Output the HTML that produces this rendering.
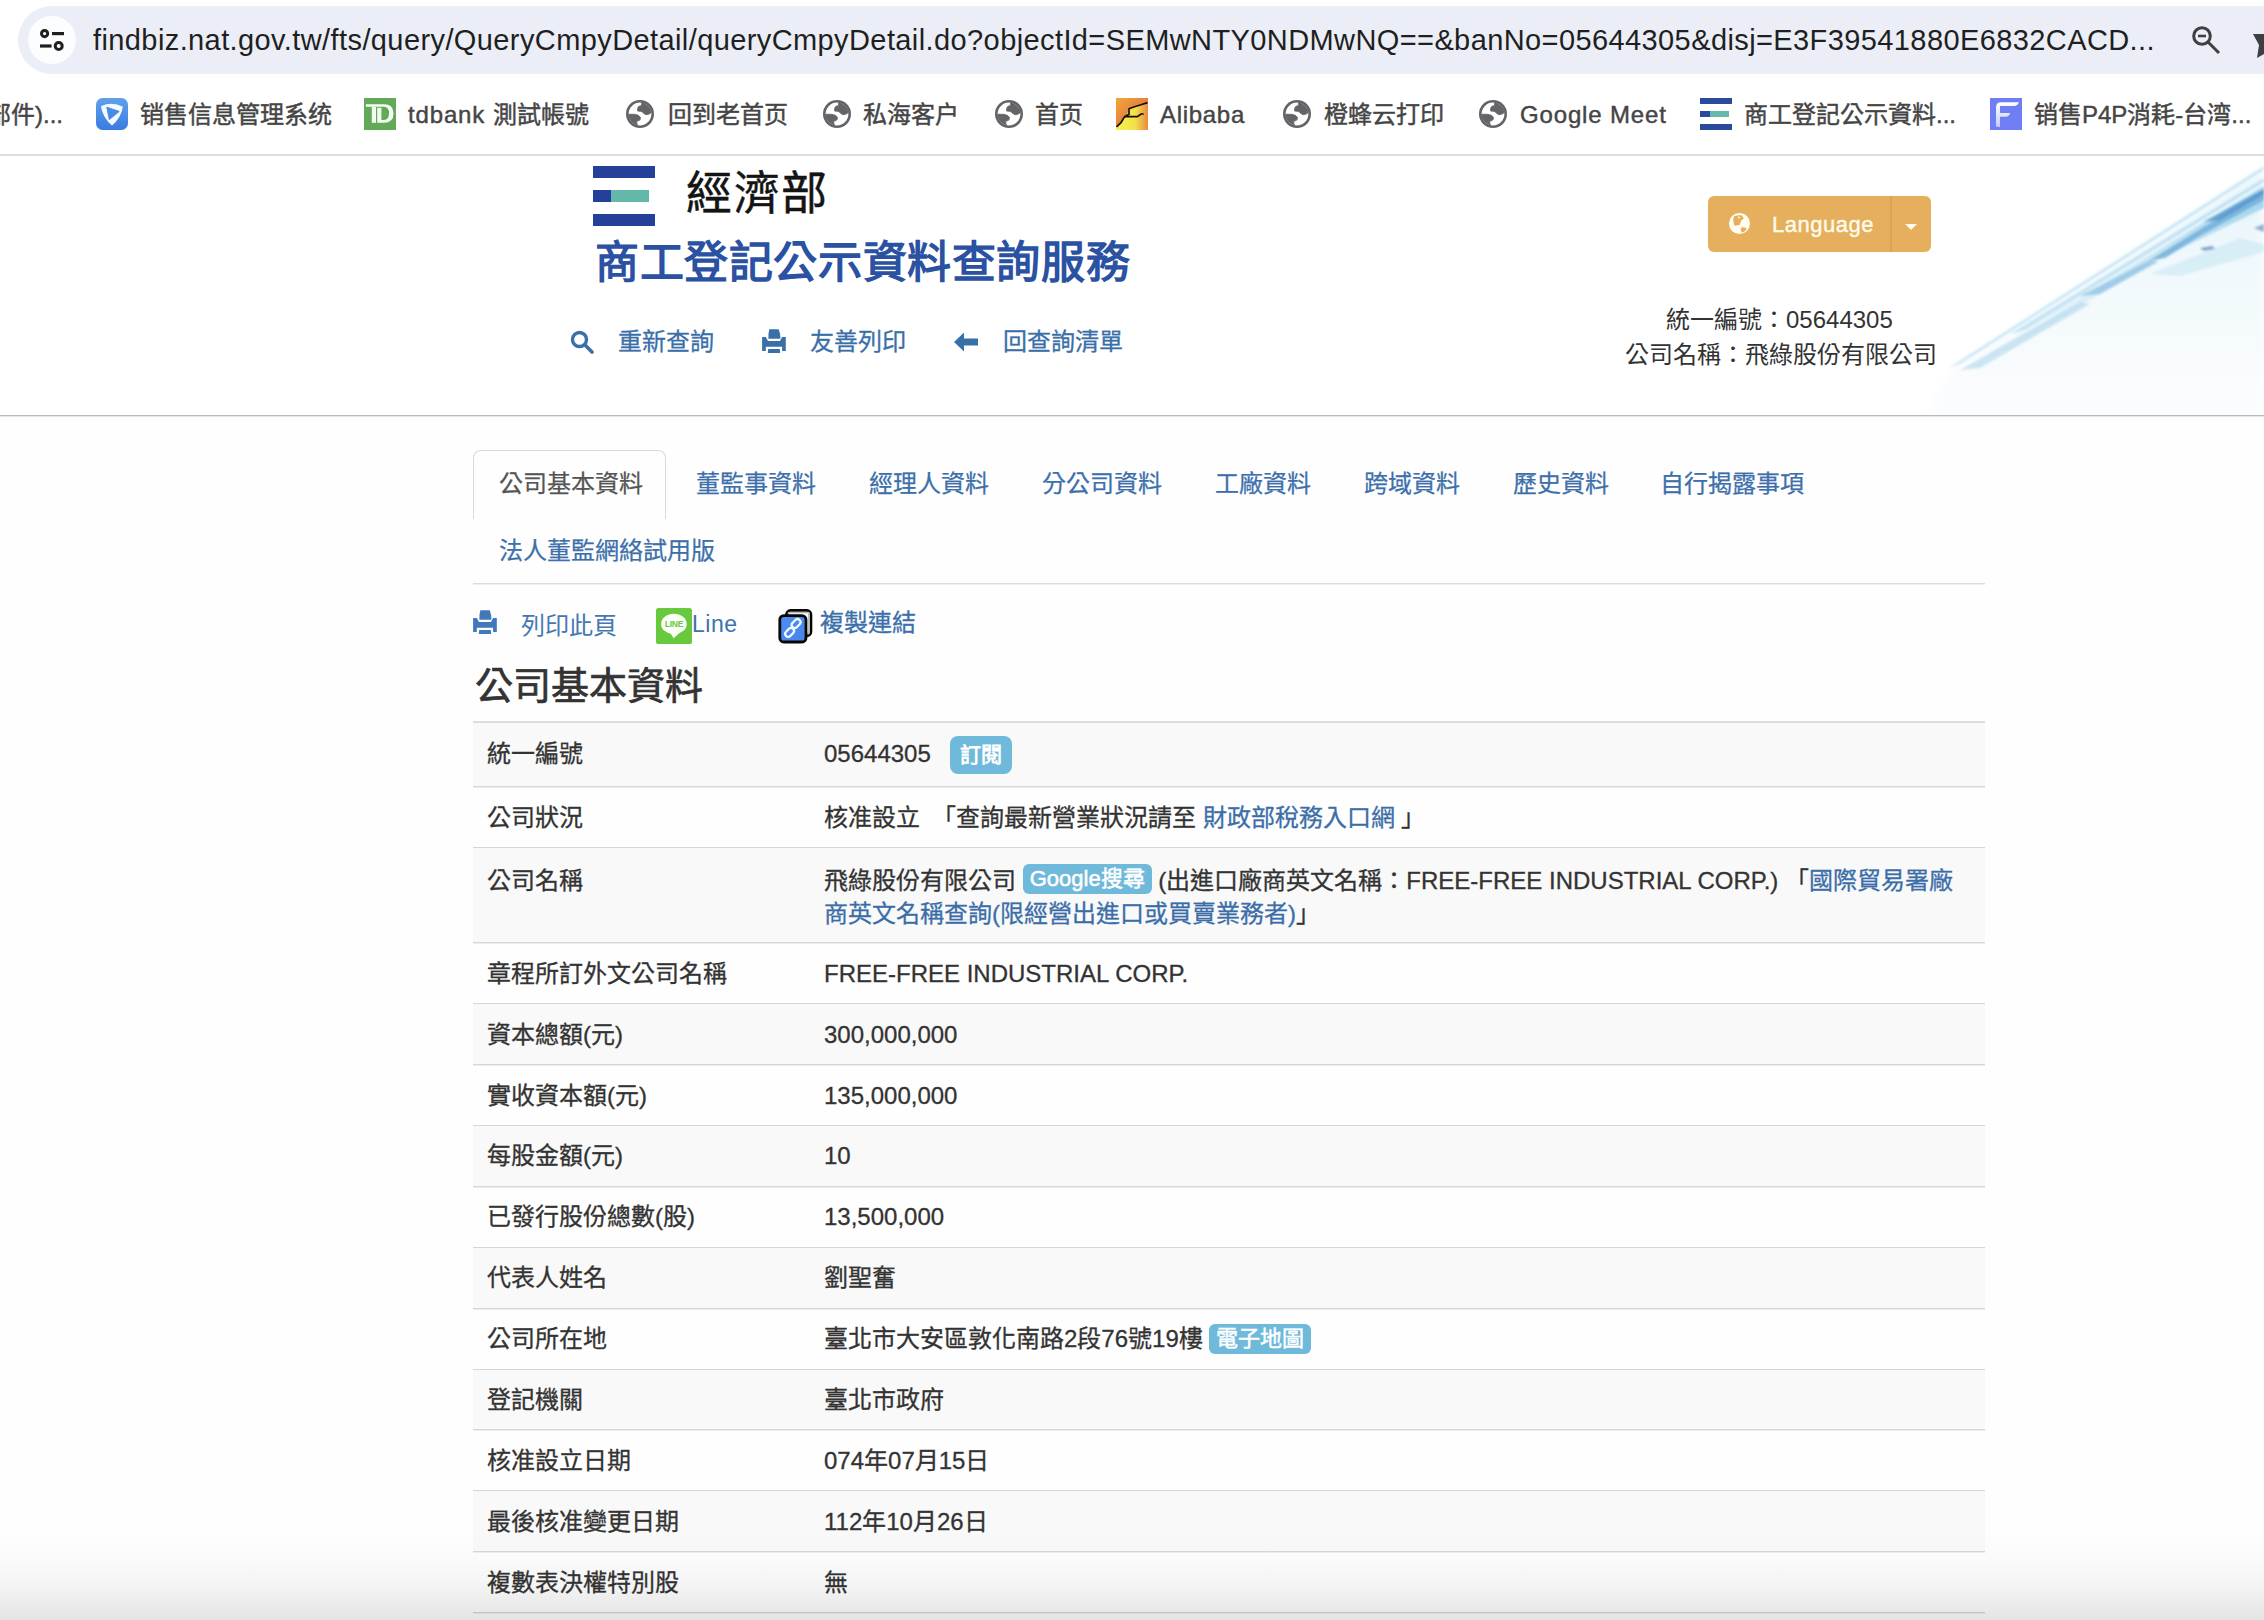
<!DOCTYPE html>
<html lang="zh-TW">
<head>
<meta charset="utf-8">
<style>
html,body{margin:0;padding:0;}
body{width:2264px;height:1620px;overflow:hidden;position:relative;background:#fefefe;font-family:"Liberation Sans",sans-serif;}
.a{position:absolute;}
.t{position:absolute;white-space:nowrap;font-family:"Liberation Sans",sans-serif;}
/* chrome */
#topbar{left:0;top:0;width:2264px;height:155px;background:#fff;}
#pill{left:18px;top:6px;width:2320px;height:68px;border-radius:34px;background:#ebeef6;}
#pillc{left:28px;top:16px;width:48px;height:48px;border-radius:24px;background:#fcfdff;}
#url{left:93px;top:18px;font-size:29px;line-height:44px;color:#1f1f1f;letter-spacing:.4px;}
#bmline{left:0;top:154px;width:2264px;height:2px;background:#dedede;}
.bm{font-size:24px;line-height:40px;top:95px;color:#454545;-webkit-text-stroke:.45px #454545;}
.ico{position:absolute;}
/* header */
#hdr{left:0;top:156px;width:2264px;height:258px;background:#fff;}
#hdrline{left:0;top:415px;width:2264px;height:1px;background:#b9b9b9;box-shadow:0 1px 0 #e6e6e6;}
.nav{font-size:24px;line-height:40px;top:322px;color:#3a70a8;-webkit-text-stroke:.3px #3a70a8;}
/* tabs */
.tab{font-size:24px;line-height:40px;top:464px;color:#3d70ab;-webkit-text-stroke:.25px #3d70ab;}
.blue{color:#3b6ea8;-webkit-text-stroke:.3px #3b6ea8;}
/* table */
.row{position:absolute;left:473px;width:1512px;}
.lab{position:absolute;left:487px;font-size:24px;line-height:40px;color:#333;white-space:nowrap;-webkit-text-stroke:.3px #333;}
.val{position:absolute;left:824px;font-size:24px;line-height:40px;color:#333;white-space:nowrap;-webkit-text-stroke:.3px #333;}
.badge{display:inline-block;background:#6fb9da;color:#fff;font-weight:bold;border-radius:8px;-webkit-text-stroke:0 #fff;}
.lbl{font-size:22px;line-height:30px;padding:0 7px;border-radius:6px;font-weight:normal;-webkit-text-stroke:.5px #fff;vertical-align:middle;position:relative;top:-2px}
</style>
</head>
<body>
<!-- ============ BROWSER CHROME ============ -->
<div id="topbar" class="a"></div>
<div id="pill" class="a"></div>
<div id="pillc" class="a"></div>
<svg class="ico" style="left:38px;top:26px" width="28" height="28" viewBox="0 0 28 28">
  <circle cx="6.6" cy="7.6" r="3.1" fill="none" stroke="#1f1f1f" stroke-width="3"/>
  <line x1="14" y1="7.6" x2="26" y2="7.6" stroke="#1f1f1f" stroke-width="3.2"/>
  <line x1="2" y1="20" x2="13.6" y2="20" stroke="#1f1f1f" stroke-width="3.2"/>
  <circle cx="20.7" cy="20" r="3.5" fill="none" stroke="#1f1f1f" stroke-width="3"/>
</svg>
<div id="url" class="t">findbiz.nat.gov.tw/fts/query/QueryCmpyDetail/queryCmpyDetail.do?objectId=SEMwNTY0NDMwNQ==&amp;banNo=05644305&amp;disj=E3F39541880E6832CACD...</div>
<svg class="ico" style="left:2188px;top:22px" width="36" height="36" viewBox="0 0 36 36">
  <circle cx="14" cy="14" r="8.3" fill="none" stroke="#3c4043" stroke-width="3"/>
  <line x1="10" y1="14" x2="18" y2="14" stroke="#3c4043" stroke-width="2.6"/>
  <line x1="20" y1="20" x2="31" y2="31" stroke="#3c4043" stroke-width="3"/>
</svg>
<svg class="ico" style="left:2250px;top:30px" width="14" height="28" viewBox="0 0 14 28">
  <path d="M3 4 L14 4 L14 24 L7 28 L9 15 Z" fill="#3c4043"/>
</svg>

<!-- bookmarks -->
<div class="t bm" style="left:-13px">部件)...</div>
<svg class="ico" style="left:96px;top:98px" width="32" height="32" viewBox="0 0 32 32">
  <defs><linearGradient id="gsh" x1="0" y1="0" x2="0" y2="1"><stop offset="0" stop-color="#62a0ec"/><stop offset="1" stop-color="#3a7ce0"/></linearGradient></defs>
  <rect x="0" y="0" width="32" height="32" rx="6.5" fill="url(#gsh)"/>
  <path d="M4.9 8.2 Q16 3 26.9 8.7 Q25 20 16 27.5 Q7 20 4.9 8.2 Z" fill="#f4fbff"/>
  <path d="M10.8 9.2 L23.2 13.4 L13.3 21.6 Z" fill="#4a8ae6" stroke="#4a8ae6" stroke-width="1" stroke-linejoin="round"/>
</svg>
<div class="t bm" style="left:140px">销售信息管理系统</div>
<svg class="ico" style="left:364px;top:98px" width="32" height="32" viewBox="0 0 32 32">
  <rect width="32" height="32" fill="#62a958"/>
  <path d="M1.85 6.3 H20 Q29.5 6.3 29.5 15.5 Q29.5 24.8 20 24.8 H13.2 V9.75 H17.4 V22 H20 Q25 22 25 15.5 Q25 8.8 20 8.8 H1.85 Z" fill="#f2fff2"/>
  <rect x="7.8" y="8.8" width="4.2" height="16" fill="#f2fff2"/>
</svg>
<div class="t bm" style="left:408px"><span style="letter-spacing:.85px">tdbank </span>測試帳號</div>
<svg class="ico" style="left:626px;top:100px" width="28" height="28" viewBox="0 0 28 28">
  <circle cx="14" cy="14" r="14" fill="#626467"/>
  <circle cx="14" cy="14" r="11.4" fill="#fff"/>
  <path d="M15.7 2 L15.5 5.6 Q13 6 12.2 7 Q11.3 8.5 11.6 11 Q14.5 11.2 16.2 11.8 Q17 13.5 20 14.7 Q23 14.8 25.4 12.6 Q24.5 6 15.7 2 Z" fill="#626467" stroke="#626467" stroke-width=".8"/>
  <path d="M2.6 14.2 L8.8 14.3 Q13 14.8 14.4 17.3 Q14.8 19.8 13.2 20.6 L10.8 21 Q10.3 23 11.5 25.2 Q3 22 2.6 14.2 Z" fill="#626467" stroke="#626467" stroke-width=".8"/>
</svg>
<div class="t bm" style="left:668px">回到老首页</div>
<svg class="ico" style="left:823px;top:100px" width="28" height="28" viewBox="0 0 28 28">
  <circle cx="14" cy="14" r="14" fill="#626467"/>
  <circle cx="14" cy="14" r="11.4" fill="#fff"/>
  <path d="M15.7 2 L15.5 5.6 Q13 6 12.2 7 Q11.3 8.5 11.6 11 Q14.5 11.2 16.2 11.8 Q17 13.5 20 14.7 Q23 14.8 25.4 12.6 Q24.5 6 15.7 2 Z" fill="#626467" stroke="#626467" stroke-width=".8"/>
  <path d="M2.6 14.2 L8.8 14.3 Q13 14.8 14.4 17.3 Q14.8 19.8 13.2 20.6 L10.8 21 Q10.3 23 11.5 25.2 Q3 22 2.6 14.2 Z" fill="#626467" stroke="#626467" stroke-width=".8"/>
</svg>
<div class="t bm" style="left:863px">私海客户</div>
<svg class="ico" style="left:995px;top:100px" width="28" height="28" viewBox="0 0 28 28">
  <circle cx="14" cy="14" r="14" fill="#626467"/>
  <circle cx="14" cy="14" r="11.4" fill="#fff"/>
  <path d="M15.7 2 L15.5 5.6 Q13 6 12.2 7 Q11.3 8.5 11.6 11 Q14.5 11.2 16.2 11.8 Q17 13.5 20 14.7 Q23 14.8 25.4 12.6 Q24.5 6 15.7 2 Z" fill="#626467" stroke="#626467" stroke-width=".8"/>
  <path d="M2.6 14.2 L8.8 14.3 Q13 14.8 14.4 17.3 Q14.8 19.8 13.2 20.6 L10.8 21 Q10.3 23 11.5 25.2 Q3 22 2.6 14.2 Z" fill="#626467" stroke="#626467" stroke-width=".8"/>
</svg>
<div class="t bm" style="left:1035px">首页</div>
<svg class="ico" style="left:1116px;top:98px" width="32" height="32" viewBox="0 0 32 32">
  <defs><linearGradient id="gal" x1="0" y1="0" x2="1" y2="0"><stop offset="0" stop-color="#f4f24e"/><stop offset=".6" stop-color="#f3e04a"/><stop offset="1" stop-color="#ea8a3e"/></linearGradient>
  <linearGradient id="gal2" x1="0" y1="0" x2="1" y2="1"><stop offset="0" stop-color="#f0a83c"/><stop offset=".5" stop-color="#e9823e"/><stop offset="1" stop-color="#e57a40"/></linearGradient></defs>
  <rect width="32" height="32" fill="url(#gal)"/>
  <path d="M0 0 H32 V4.5 L25 6.8 L18.5 8.7 L13 10.8 L10.8 16.8 L8 18.7 L5 24.7 L0 29 Z" fill="url(#gal2)"/>
  <path d="M0.5 29 L5 24.7 L8 19.5 L10.8 17.2 L13 16.5 V10.8 L18.5 8.7 L25 6.8 L31.5 4.6 M8 18.7 H21.4 L25 16 H27.7" fill="none" stroke="#151008" stroke-width="1.7"/>
</svg>
<div class="t bm" style="left:1160px;letter-spacing:.7px">Alibaba</div>
<svg class="ico" style="left:1283px;top:100px" width="28" height="28" viewBox="0 0 28 28">
  <circle cx="14" cy="14" r="14" fill="#626467"/>
  <circle cx="14" cy="14" r="11.4" fill="#fff"/>
  <path d="M15.7 2 L15.5 5.6 Q13 6 12.2 7 Q11.3 8.5 11.6 11 Q14.5 11.2 16.2 11.8 Q17 13.5 20 14.7 Q23 14.8 25.4 12.6 Q24.5 6 15.7 2 Z" fill="#626467" stroke="#626467" stroke-width=".8"/>
  <path d="M2.6 14.2 L8.8 14.3 Q13 14.8 14.4 17.3 Q14.8 19.8 13.2 20.6 L10.8 21 Q10.3 23 11.5 25.2 Q3 22 2.6 14.2 Z" fill="#626467" stroke="#626467" stroke-width=".8"/>
</svg>
<div class="t bm" style="left:1324px">橙蜂云打印</div>
<svg class="ico" style="left:1479px;top:100px" width="28" height="28" viewBox="0 0 28 28">
  <circle cx="14" cy="14" r="14" fill="#626467"/>
  <circle cx="14" cy="14" r="11.4" fill="#fff"/>
  <path d="M15.7 2 L15.5 5.6 Q13 6 12.2 7 Q11.3 8.5 11.6 11 Q14.5 11.2 16.2 11.8 Q17 13.5 20 14.7 Q23 14.8 25.4 12.6 Q24.5 6 15.7 2 Z" fill="#626467" stroke="#626467" stroke-width=".8"/>
  <path d="M2.6 14.2 L8.8 14.3 Q13 14.8 14.4 17.3 Q14.8 19.8 13.2 20.6 L10.8 21 Q10.3 23 11.5 25.2 Q3 22 2.6 14.2 Z" fill="#626467" stroke="#626467" stroke-width=".8"/>
</svg>
<div class="t bm" style="left:1520px;letter-spacing:.85px">Google Meet</div>
<svg class="ico" style="left:1700px;top:98px" width="32" height="32" viewBox="0 0 32 32">
  <rect x="0" y="0" width="32" height="6" fill="#2a4a9e"/>
  <rect x="0" y="13" width="10" height="6" fill="#2a4a9e"/>
  <rect x="10" y="13" width="19" height="6" fill="#65b9aa"/>
  <rect x="0" y="26" width="32" height="6" fill="#2a4a9e"/>
</svg>
<div class="t bm" style="left:1744px">商工登記公示資料...</div>
<svg class="ico" style="left:1990px;top:98px" width="32" height="32" viewBox="0 0 32 32">
  <defs><linearGradient id="gff" x1="0" y1="0" x2="0" y2="1"><stop offset="0" stop-color="#ffffff"/><stop offset="1" stop-color="#c4ccff"/></linearGradient></defs>
  <rect width="32" height="32" fill="#6f7ef2"/>
  <path d="M6 29 V9.5 Q6 4.3 11 4.3 H29 Q27.5 7.9 24.5 7.9 H10 V15 H20.2 Q19.2 18.7 15.5 18.7 H10 V29.2 Q6 28 6 29 Z" fill="url(#gff)"/>
</svg>
<div class="t bm" style="left:2034px">销售P4P消耗-台湾...</div>

<div id="bmline" class="a"></div>

<!-- ============ HEADER ============ -->
<div id="hdr" class="a"></div>
<svg class="a" style="left:1900px;top:156px" width="364" height="258" viewBox="0 0 364 258">
  <defs>
    <filter id="bl1" x="-20%" y="-50%" width="140%" height="200%"><feGaussianBlur stdDeviation="1.3"/></filter>
    <filter id="bl3" x="-20%" y="-20%" width="140%" height="140%"><feGaussianBlur stdDeviation="5"/></filter>
    <linearGradient id="dg2" x1="0" y1="0" x2="0" y2="1"><stop offset="0" stop-color="#e2f3fa" stop-opacity=".85"/><stop offset=".5" stop-color="#ecf7fb" stop-opacity=".7"/><stop offset="1" stop-color="#f5f9fb" stop-opacity=".4"/></linearGradient>
    <linearGradient id="dg1" x1="0" y1="1" x2="1" y2="0"><stop offset="0" stop-color="#cfe8f4" stop-opacity="0"/><stop offset=".45" stop-color="#b5dcef" stop-opacity=".6"/><stop offset="1" stop-color="#7cc3e6" stop-opacity=".9"/></linearGradient>
  </defs>
  <path d="M52 212 L364 14 L364 258 L25 258 Z" fill="url(#dg2)" filter="url(#bl3)"/>
  <g filter="url(#bl1)">
  <path d="M50 211 L364 10 L364 14 L60 208 Z" fill="#b8e0f2" opacity=".7"/>
  <path d="M110 178 L364 22 L364 26 L125 174 Z" fill="#a6d6ee" opacity=".6"/>
  <path d="M60 214 L364 30 L364 52 L250 108 L120 186 Z" fill="url(#dg1)" opacity=".75"/>
  <path d="M250 104 L364 34 L364 44 L300 80 L265 102 Z" fill="#69a9d8" opacity=".75"/>
  <path d="M303 66 L364 33 L364 38 L320 64 Z" fill="#4f8fc8" opacity=".7"/>
  <path d="M180 140 L250 104 L258 106 L200 138 Z" fill="#7db8df" opacity=".6"/>
  <path d="M60 214 L180 146 L190 148 L80 212 Z" fill="#a9d3ea" opacity=".55"/>
  <path d="M300 92 L312 90 L316 93 L304 95 Z" fill="#5a7fb8" opacity=".7"/>
  <path d="M354 72 L364 68 L364 76 Z" fill="#5a7fb8" opacity=".6"/>
  <path d="M250 118 L340 82 L364 88 L364 96 L280 120 Z" fill="#c8e8f4" opacity=".6"/>
  </g>
</svg>
<div class="a" style="left:593px;top:166px;width:62px;height:12px;background:#26409a"></div>
<div class="a" style="left:593px;top:190px;width:18px;height:12px;background:#26409a"></div>
<div class="a" style="left:611px;top:190px;width:38px;height:12px;background:#63b8a9"></div>
<div class="a" style="left:593px;top:214px;width:62px;height:12px;background:#26409a"></div>
<div class="t" style="left:686px;top:167px;font-size:46px;line-height:52px;color:#141414;letter-spacing:1.5px;-webkit-text-stroke:.5px #141414">經濟部</div>
<div class="t" style="left:595px;top:235px;font-size:44px;line-height:56px;color:#2b52a2;font-weight:bold;letter-spacing:.6px">商工登記公示資料查詢服務</div>
<svg class="ico" style="left:570px;top:330px" width="25" height="24" viewBox="0 0 25 24">
  <circle cx="9.5" cy="9.5" r="7" fill="none" stroke="#3a70a8" stroke-width="3.4"/>
  <line x1="14.8" y1="14.8" x2="22" y2="22" stroke="#3a70a8" stroke-width="3.6" stroke-linecap="round"/>
</svg>
<div class="t nav" style="left:618px">重新查詢</div>
<svg class="ico" style="left:762px;top:329px" width="24" height="24" viewBox="0 0 24 24">
  <path d="M7.3 0.2 H16.7 Q18.6 4.5 18.4 9.7 H6.4 Q6.2 4.5 7.3 0.2 Z" fill="#3a70a8"/>
  <path d="M0.1 8.1 H3.8 L6 12.1 H18 L20.1 8.1 H23.8 V21.9 H20.1 V17.7 H3.8 V21.9 H0.1 Z" fill="#3a70a8"/>
  <path d="M6.2 20.1 H17.8 L18.2 23.9 H5.8 Z" fill="#3a70a8"/>
</svg>
<div class="t nav" style="left:810px">友善列印</div>
<svg class="ico" style="left:954px;top:331px" width="25" height="22" viewBox="0 0 25 22">
  <path d="M0 11 L10 1.5 V7.5 H24 V14.5 H10 V20.5 Z" fill="#3a70a8"/>
</svg>
<div class="t nav" style="left:1003px">回查詢清單</div>

<div class="a" style="left:1708px;top:196px;width:223px;height:56px;border-radius:6px;background:#e5af5d"></div>
<div class="a" style="left:1890px;top:196px;width:2px;height:56px;background:#dba553"></div>
<svg class="ico" style="left:1728px;top:212px" width="23" height="23" viewBox="0 0 23 23">
  <circle cx="11.5" cy="11.5" r="10.5" fill="#fffdf0"/>
  <path d="M6.3 4.1 Q10 3 14.2 3.4 L15.7 6.8 Q13.5 7.5 13 9 Q12.2 12 11.75 12.75 Q10 13.2 6.8 13.7 Q5.2 12 5.3 6.6 Z" fill="#e5af5d"/>
  <path d="M13 15.7 Q15.5 14.6 18.7 16.5 Q18 18.5 16.7 19.2 Q14.5 20.5 13.7 20.4 Q12 18 13 15.7 Z" fill="#e5af5d"/>
  <circle cx="11" cy="5.5" r="1" fill="#fffdf0"/>
</svg>
<div class="t" style="left:1772px;top:207px;font-size:22px;line-height:36px;color:#fffbea;letter-spacing:.5px;-webkit-text-stroke:.4px #fffbea">Language</div>
<svg class="ico" style="left:1905px;top:224px" width="12" height="6" viewBox="0 0 12 6"><path d="M0 0 H12 L6 6 Z" fill="#fffbea"/></svg>
<div class="t" style="left:1666px;top:300px;font-size:24px;line-height:40px;color:#333">統一編號：05644305</div>
<div class="t" style="left:1625px;top:335px;font-size:24px;line-height:40px;color:#333">公司名稱：飛綠股份有限公司</div>
<div id="hdrline" class="a"></div>

<!-- ============ CONTENT ============ -->
<div class="a" style="left:473px;top:450px;width:191px;height:68px;border:1.5px solid #d9d9d9;border-bottom:none;border-radius:8px 8px 0 0;background:#fefefe"></div>
<div class="t tab" style="left:499px;color:#555;-webkit-text-stroke:.25px #555">公司基本資料</div>
<div class="t tab" style="left:696px">董監事資料</div>
<div class="t tab" style="left:869px">經理人資料</div>
<div class="t tab" style="left:1042px">分公司資料</div>
<div class="t tab" style="left:1215px">工廠資料</div>
<div class="t tab" style="left:1364px">跨域資料</div>
<div class="t tab" style="left:1513px">歷史資料</div>
<div class="t tab" style="left:1660px">自行揭露事項</div>
<div class="t tab" style="left:499px;top:531px">法人董監網絡試用版</div>
<div class="a" style="left:473px;top:583px;width:1512px;height:1px;background:#dcdcdc;box-shadow:0 1px 0 #efefef"></div>

<svg class="ico" style="left:473px;top:610px" width="24" height="24" viewBox="0 0 24 24">
  <path d="M7.3 0.2 H16.7 Q18.6 4.5 18.4 9.7 H6.4 Q6.2 4.5 7.3 0.2 Z" fill="#4278b8"/>
  <path d="M0.1 8.1 H3.8 L6 12.1 H18 L20.1 8.1 H23.8 V21.9 H20.1 V17.7 H3.8 V21.9 H0.1 Z" fill="#4278b8"/>
  <path d="M6.2 20.1 H17.8 L18.2 23.9 H5.8 Z" fill="#4278b8"/>
</svg>
<div class="t" style="left:521px;top:606px;font-size:24px;line-height:40px;color:#4577b2">列印此頁</div>
<svg class="ico" style="left:656px;top:608px" width="36" height="36" viewBox="0 0 36 36">
  <rect width="36" height="36" rx="2.6" fill="#69c93e"/>
  <ellipse cx="17.9" cy="15.9" rx="12.8" ry="10.2" fill="#fbfff8"/>
  <path d="M14 24.5 L17.6 30.2 L24 24.5 Z" fill="#fbfff8"/>
  <text x="18" y="19.4" font-size="8.6" font-weight="bold" text-anchor="middle" fill="#69c93e" font-family="Liberation Sans" letter-spacing="-.3">LINE</text>
</svg>
<div class="t" style="left:692px;top:606px;font-size:23px;line-height:36px;color:#3d72ad;letter-spacing:.5px">Line</div>
<svg class="ico" style="left:778px;top:608px" width="36" height="36" viewBox="0 0 36 36">
  <defs><linearGradient id="gcp" x1="0" y1="0" x2="1" y2="1"><stop offset="0" stop-color="#4d8cf6"/><stop offset="1" stop-color="#4a84e8"/></linearGradient></defs>
  <rect x="8.4" y="2.4" width="24.6" height="25.4" rx="4" fill="#fff" stroke="#060606" stroke-width="2.6"/>
  <rect x="10.6" y="4.6" width="20.2" height="21" fill="none" stroke="#b8b8b8" stroke-width="1.4"/>
  <rect x="1.8" y="7.6" width="26.2" height="26.4" rx="4" fill="url(#gcp)" stroke="#060606" stroke-width="2.8"/>
  <g fill="none" stroke="#f2fbff" stroke-width="2.2">
    <rect x="6.6" y="21.4" width="10" height="6" rx="3" transform="rotate(-45 11.6 24.4)"/>
    <rect x="13.1" y="12.6" width="10" height="6" rx="3" transform="rotate(-45 18.1 15.6)"/>
  </g>
</svg>
<div class="t" style="left:820px;top:603px;font-size:24px;line-height:40px;color:#3c70ab;-webkit-text-stroke:.3px #3c70ab">複製連結</div>
<div class="t" style="left:475px;top:661px;font-size:38px;line-height:50px;color:#333;-webkit-text-stroke:.7px #333">公司基本資料</div>

<!-- table -->
<div class="row" style="top:721px;height:2px;background:#dcdcdc"></div>
<div class="row" style="top:723px;height:64px;background:#f9f9f9"></div>
<div class="row" style="top:786px;height:2px;background:linear-gradient(#d6d6d6 0,#d6d6d6 50%,#ededed 50%,#ededed 100%)"></div>
<div class="lab" style="top:733.8px">統一編號</div>
<div class="val" style="top:733.8px">05644305 <span class="badge" style="font-size:21px;line-height:38px;padding:0 10px;margin-left:13px;vertical-align:middle;position:relative;top:0px">訂閱</span></div>
<div class="row" style="top:847px;height:2px;background:linear-gradient(#d6d6d6 0,#d6d6d6 50%,#ededed 50%,#ededed 100%)"></div>
<div class="lab" style="top:797.8px">公司狀況</div>
<div class="val" style="top:797.8px">核准設立　「查詢最新營業狀況請至 <span class="blue">財政部稅務入口網</span> 」</div>
<div class="row" style="top:848px;height:95px;background:#f9f9f9"></div>
<div class="row" style="top:942px;height:2px;background:linear-gradient(#d6d6d6 0,#d6d6d6 50%,#ededed 50%,#ededed 100%)"></div>
<div class="lab" style="top:861.0px">公司名稱</div>
<div class="val" style="top:861.0px">飛綠股份有限公司 <span class="badge lbl" style="top:-4px">Google搜尋</span> (出進口廠商英文名稱：FREE-FREE INDUSTRIAL CORP.) 「<span class="blue">國際貿易署廠</span></div>
<div class="val" style="top:894.0px"><span class="blue">商英文名稱查詢(限經營出進口或買賣業務者)</span>」</div>
<div class="row" style="top:1003px;height:2px;background:linear-gradient(#d6d6d6 0,#d6d6d6 50%,#ededed 50%,#ededed 100%)"></div>
<div class="lab" style="top:953.6px">章程所訂外文公司名稱</div>
<div class="val" style="top:953.6px">FREE-FREE INDUSTRIAL CORP.</div>
<div class="row" style="top:1004px;height:61px;background:#f9f9f9"></div>
<div class="row" style="top:1064px;height:2px;background:linear-gradient(#d6d6d6 0,#d6d6d6 50%,#ededed 50%,#ededed 100%)"></div>
<div class="lab" style="top:1014.5px">資本總額(元)</div>
<div class="val" style="top:1014.5px">300,000,000</div>
<div class="row" style="top:1125px;height:2px;background:linear-gradient(#d6d6d6 0,#d6d6d6 50%,#ededed 50%,#ededed 100%)"></div>
<div class="lab" style="top:1075.5px">實收資本額(元)</div>
<div class="val" style="top:1075.5px">135,000,000</div>
<div class="row" style="top:1126px;height:61px;background:#f9f9f9"></div>
<div class="row" style="top:1186px;height:2px;background:linear-gradient(#d6d6d6 0,#d6d6d6 50%,#ededed 50%,#ededed 100%)"></div>
<div class="lab" style="top:1136.3px">每股金額(元)</div>
<div class="val" style="top:1136.3px">10</div>
<div class="row" style="top:1247px;height:2px;background:linear-gradient(#d6d6d6 0,#d6d6d6 50%,#ededed 50%,#ededed 100%)"></div>
<div class="lab" style="top:1197.2px">已發行股份總數(股)</div>
<div class="val" style="top:1197.2px">13,500,000</div>
<div class="row" style="top:1248px;height:61px;background:#f9f9f9"></div>
<div class="row" style="top:1308px;height:2px;background:linear-gradient(#d6d6d6 0,#d6d6d6 50%,#ededed 50%,#ededed 100%)"></div>
<div class="lab" style="top:1258.2px">代表人姓名</div>
<div class="val" style="top:1258.2px">劉聖奮</div>
<div class="row" style="top:1369px;height:2px;background:linear-gradient(#d6d6d6 0,#d6d6d6 50%,#ededed 50%,#ededed 100%)"></div>
<div class="lab" style="top:1319.0px">公司所在地</div>
<div class="val" style="top:1319.0px">臺北市大安區敦化南路2段76號19樓 <span class="badge lbl">電子地圖</span></div>
<div class="row" style="top:1370px;height:60px;background:#f9f9f9"></div>
<div class="row" style="top:1429px;height:2px;background:linear-gradient(#d6d6d6 0,#d6d6d6 50%,#ededed 50%,#ededed 100%)"></div>
<div class="lab" style="top:1380.0px">登記機關</div>
<div class="val" style="top:1380.0px">臺北市政府</div>
<div class="row" style="top:1490px;height:2px;background:linear-gradient(#d6d6d6 0,#d6d6d6 50%,#ededed 50%,#ededed 100%)"></div>
<div class="lab" style="top:1440.8px">核准設立日期</div>
<div class="val" style="top:1440.8px">074年07月15日</div>
<div class="row" style="top:1491px;height:61px;background:#f9f9f9"></div>
<div class="row" style="top:1551px;height:2px;background:linear-gradient(#d6d6d6 0,#d6d6d6 50%,#ededed 50%,#ededed 100%)"></div>
<div class="lab" style="top:1501.8px">最後核准變更日期</div>
<div class="val" style="top:1501.8px">112年10月26日</div>
<div class="row" style="top:1612px;height:2px;background:linear-gradient(#d6d6d6 0,#d6d6d6 50%,#ededed 50%,#ededed 100%)"></div>
<div class="lab" style="top:1562.7px">複數表決權特別股</div>
<div class="val" style="top:1562.7px">無</div>
<div class="a" style="left:0;top:1500px;width:2264px;height:120px;background:linear-gradient(to bottom,rgba(0,0,0,0) 0px,rgba(0,0,0,0) 30px,rgba(0,0,0,.015) 60px,rgba(0,0,0,.04) 85px,rgba(0,0,0,.1) 120px)"></div>

</body>
</html>
